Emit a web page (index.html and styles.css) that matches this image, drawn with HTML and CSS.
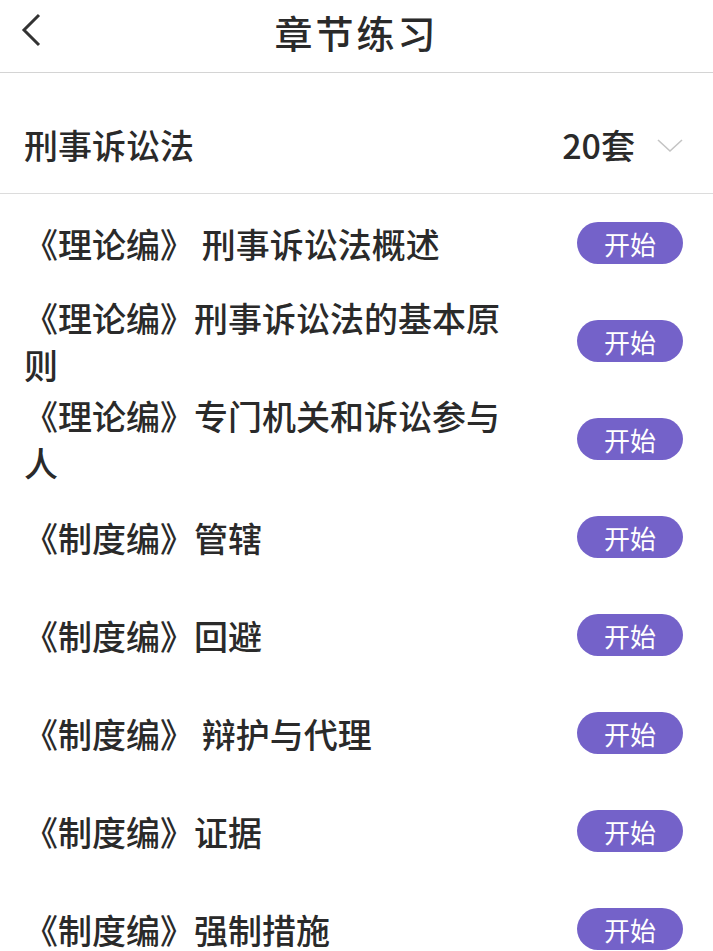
FILE: index.html
```html
<!DOCTYPE html>
<html lang="zh-CN">
<head>
    <meta charset="UTF-8">
    <meta name="viewport" content="width=device-width, initial-scale=1.0">
    <title>章节练习</title>
    <link rel="stylesheet" href="styles.css">
</head>
<body>
    <div class="page">
        <header class="topbar">
            <a href="#" class="back">
                <svg width="24" height="34" viewBox="0 0 24 34">
                    <polyline points="20,2 5,17 20,32" fill="none" stroke="#333" stroke-width="3"/>
                </svg>
            </a>
            <h1>章节练习</h1>
        </header>
        <div class="subject">
            <span class="subject__name">刑事诉讼法</span>
            <span class="subject__count">20套</span>
            <svg class="subject__arrow" width="26" height="14" viewBox="0 0 26 14">
                <polyline points="1,1 13,12 25,1" fill="none" stroke="#c4c4c4" stroke-width="1.6"/>
            </svg>
        </div>
        <ul class="chapters">
            <li class="chapter">
                <span class="chapter__title">《理论编》 刑事诉讼法概述</span>
                <a href="#" class="btn">开始</a>
            </li>
            <li class="chapter">
                <span class="chapter__title">《理论编》刑事诉讼法的基本原则</span>
                <a href="#" class="btn">开始</a>
            </li>
            <li class="chapter">
                <span class="chapter__title">《理论编》专门机关和诉讼参与人</span>
                <a href="#" class="btn">开始</a>
            </li>
            <li class="chapter">
                <span class="chapter__title">《制度编》管辖</span>
                <a href="#" class="btn">开始</a>
            </li>
            <li class="chapter">
                <span class="chapter__title">《制度编》回避</span>
                <a href="#" class="btn">开始</a>
            </li>
            <li class="chapter">
                <span class="chapter__title">《制度编》 辩护与代理</span>
                <a href="#" class="btn">开始</a>
            </li>
            <li class="chapter">
                <span class="chapter__title">《制度编》证据</span>
                <a href="#" class="btn">开始</a>
            </li>
            <li class="chapter">
                <span class="chapter__title">《制度编》强制措施</span>
                <a href="#" class="btn">开始</a>
            </li>
        </ul>
    </div>
</body>
</html>
```

FILE: styles.css
```css
body {
    margin: 0;
    background: #fff;
    font-family: "Noto Sans CJK SC", "Noto Sans", sans-serif;
    font-weight: 500;
    color: #2a2a2a;
}
.page {
    width: 100%;
    height: 951px;
    overflow: hidden;
}
.topbar {
    position: relative;
    display: flex;
    justify-content: center;
    align-items: center;
    height: 72px;
    border-bottom: 1px solid #d4d4d4;
}
.topbar h1 {
    margin: -10px 0 0 0;
    font-size: 38px;
    font-weight: 500;
    letter-spacing: 3px;
    color: #2a2a2a;
}
.back {
    position: absolute;
    left: 19px;
    top: 13px;
    display: flex;
}
.subject {
    display: flex;
    align-items: center;
    height: 92px;
    margin-top: 28px;
    padding: 0 30px 0 24px;
    border-bottom: 1px solid #dcdcdc;
}
.subject__name {
    flex: 1;
    font-size: 34px;
    margin-top: -6px;
}
.subject__count {
    font-size: 34px;
    margin-top: -6px;
    margin-right: 22px;
}
.subject__arrow {
    margin-top: -2px;
}
.chapters {
    list-style: none;
    margin: 0;
    padding: 0;
}
.chapter {
    display: flex;
    align-items: center;
    height: 98px;
    padding: 0 30px 0 24px;
}
.chapter__title {
    flex: 1;
    margin-right: 60px;
    font-size: 34px;
    line-height: 47px;
}
.btn {
    display: flex;
    justify-content: center;
    align-items: center;
    width: 106px;
    height: 42px;
    border-radius: 21px;
    background: #7462c9;
    color: #fff;
    font-size: 26px;
    font-weight: 400;
    text-decoration: none;
}
```
